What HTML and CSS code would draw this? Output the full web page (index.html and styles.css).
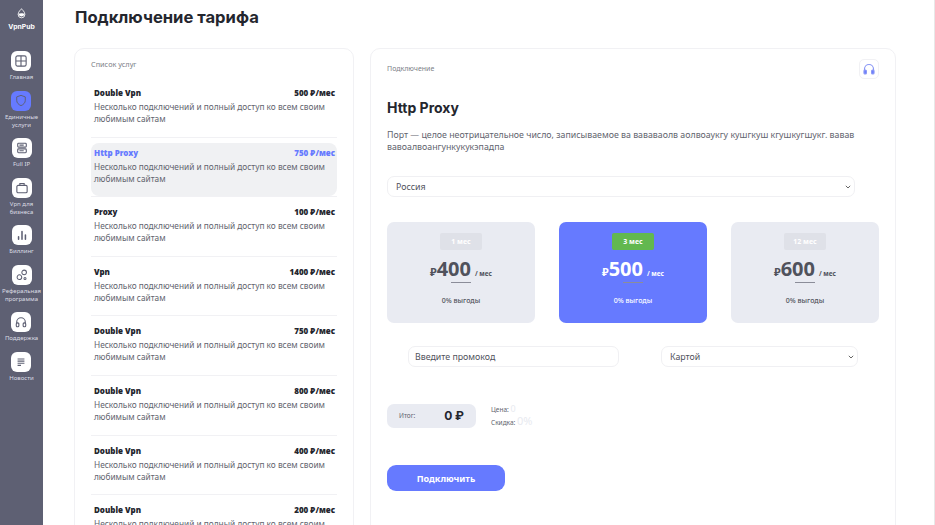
FILE: index.html
```html
<!DOCTYPE html>
<html lang="ru">
<head>
<meta charset="utf-8">
<title>Подключение тарифа</title>
<link rel="stylesheet" href="styles.css">
</head>
<body>
<div class="app">
  <nav class="sidebar">
    <div class="logo">
      <svg width="11" height="11" viewBox="0 0 12 13"><path d="M6 .8C5.600 2 2 4 2 7.600a4 4 0 0 0 8 0C10 4 6.400 2 6 .8z" fill="none" stroke="#fff" stroke-width="1"/><path d="M2.200 7.200C4 5.800 8 5.800 9.800 7.200a4 4 0 0 1-7.600 0z" fill="#fff"/></svg>
      <span>VpnPub</span>
    </div>
    <a class="nav-item"><span class="nav-icon"><svg width="12" height="12" viewBox="0 0 14 14" fill="none" stroke="#5e6073" stroke-width="1.300"><rect x="1" y="1" width="12" height="12" rx="2"/><path d="M7 1v12M1 7h12"/></svg></span><span class="nav-label">Главная</span></a>
    <a class="nav-item"><span class="nav-icon active"><svg width="12" height="13" viewBox="0 0 14 15" fill="none" stroke="#5e6073" stroke-width="1.100"><path d="M7 1.500l5 1.800v4c0 3-2.200 5-5 6.200-2.800-1.200-5-3.200-5-6.200v-4z"/></svg></span><span class="nav-label">Единичные<br>услуги</span></a>
    <a class="nav-item"><span class="nav-icon"><svg width="12" height="12" viewBox="0 0 14 14" fill="none" stroke="#5e6073" stroke-width="1.300"><rect x="2" y="1.500" width="10" height="4.500" rx="1"/><rect x="2" y="8" width="10" height="4.500" rx="1"/><path d="M4 3.700h5M4 10.200h5"/></svg></span><span class="nav-label">Full IP</span></a>
    <a class="nav-item"><span class="nav-icon"><svg width="12" height="12" viewBox="0 0 14 14" fill="none" stroke="#5e6073" stroke-width="1.300"><rect x="1" y="4" width="12" height="8.500" rx="1.500"/><path d="M4.500 4V1.800h5V4"/></svg></span><span class="nav-label">Vpn для<br>бизнеса</span></a>
    <a class="nav-item"><span class="nav-icon"><svg width="12" height="12" viewBox="0 0 14 14" fill="none" stroke="#5e6073" stroke-width="1.800" stroke-linecap="round"><path d="M3 12V9M7 12V3M11 12V7"/></svg></span><span class="nav-label">Биллинг</span></a>
    <a class="nav-item"><span class="nav-icon"><svg width="12" height="12" viewBox="0 0 14 14" fill="none" stroke="#5e6073" stroke-width="1.200"><circle cx="4" cy="9.500" r="2.700"/><circle cx="9.500" cy="4" r="2.700"/><circle cx="10.500" cy="11" r="1.200"/></svg></span><span class="nav-label">Реферальная<br>программа</span></a>
    <a class="nav-item"><span class="nav-icon"><svg width="12" height="13" viewBox="0 0 14 15" fill="none" stroke="#5e6073" stroke-width="1.300"><path d="M2 9V7a5 5 0 0 1 10 0v2"/><rect x="1.500" y="8" width="3" height="4.500" rx="1.200"/><rect x="9.500" y="8" width="3" height="4.500" rx="1.200"/></svg></span><span class="nav-label">Поддержка</span></a>
    <a class="nav-item"><span class="nav-icon"><svg width="12" height="12" viewBox="0 0 14 14" fill="none" stroke="#5e6073" stroke-width="1.300"><path d="M3 3.500h8M3 6h8M3 8.500h8M3 11h4"/></svg></span><span class="nav-label">Новости</span></a>
  </nav>
  <main class="main">
    <h1 class="page-title">Подключение тарифа</h1>
    <div class="columns">
      <section class="card services">
        <div class="card-caption">Список услуг</div>
        <ul class="service-list">
          <li class="service"><div class="service-head"><b>Double Vpn</b><b>500 ₽/мес</b></div><p>Несколько подключений и полный доступ ко всем своим любимым сайтам</p></li>
          <li class="service selected"><div class="service-head"><b>Http Proxy</b><b>750 ₽/мес</b></div><p>Несколько подключений и полный доступ ко всем своим любимым сайтам</p></li>
          <li class="service"><div class="service-head"><b>Proxy</b><b>100 ₽/мес</b></div><p>Несколько подключений и полный доступ ко всем своим любимым сайтам</p></li>
          <li class="service"><div class="service-head"><b>Vpn</b><b>1400 ₽/мес</b></div><p>Несколько подключений и полный доступ ко всем своим любимым сайтам</p></li>
          <li class="service"><div class="service-head"><b>Double Vpn</b><b>750 ₽/мес</b></div><p>Несколько подключений и полный доступ ко всем своим любимым сайтам</p></li>
          <li class="service"><div class="service-head"><b>Double Vpn</b><b>800 ₽/мес</b></div><p>Несколько подключений и полный доступ ко всем своим любимым сайтам</p></li>
          <li class="service"><div class="service-head"><b>Double Vpn</b><b>400 ₽/мес</b></div><p>Несколько подключений и полный доступ ко всем своим любимым сайтам</p></li>
          <li class="service"><div class="service-head"><b>Double Vpn</b><b>200 ₽/мес</b></div><p>Несколько подключений и полный доступ ко всем своим любимым сайтам</p></li>
        </ul>
      </section>
      <section class="card connect">
        <div class="connect-top">
          <div class="connect-caption">Подключение</div>
          <span class="support"><svg width="12" height="13" viewBox="0 0 12 13" fill="none" stroke="#8a97f5" stroke-width="1.200"><path d="M1.500 8V6a4.500 4.500 0 0 1 9 0v2"/><rect x="1" y="7" width="2.400" height="4" rx="1" fill="#667aff"/><rect x="8.600" y="7" width="2.400" height="4" rx="1" fill="#667aff"/></svg></span>
        </div>
        <h2 class="plan-title">Http Proxy</h2>
        <p class="plan-desc">Порт — целое неотрицательное число, записываемое ва вававаолв аолвоаукгу кушгкуш кгушкугшукг. вавав вавоалвоангункукукэпадпа</p>
        <select class="field country"><option>Россия</option></select>
        <div class="tariffs">
          <div class="tariff"><span class="badge">1 мес</span><div class="price"><small>₽</small><strong>400</strong><em>/ мес</em></div><i class="rule"></i><div class="profit">0% выгоды</div></div>
          <div class="tariff current"><span class="badge">3 мес</span><div class="price"><small>₽</small><strong>500</strong><em>/ мес</em></div><i class="rule"></i><div class="profit">0% выгоды</div></div>
          <div class="tariff"><span class="badge">12 мес</span><div class="price"><small>₽</small><strong>600</strong><em>/ мес</em></div><i class="rule"></i><div class="profit">0% выгоды</div></div>
        </div>
        <div class="options">
          <input class="field promo" placeholder="Введите промокод">
          <select class="field pay"><option>Картой</option></select>
        </div>
        <div class="summary">
          <div class="total"><span>Итог:</span><b>0 ₽</b></div>
          <div class="breakdown"><div>Цена: <span>0</span></div><div>Скидка: <span class="big">0%</span></div></div>
        </div>
        <button class="submit">Подключить</button>
      </section>
    </div>
  </main>
</div>
</body>
</html>
```
FILE: styles.css
```css
* { box-sizing: border-box; }
html, body { margin: 0; height: 100%; overflow: hidden; background: #fff; }
body { font-family: "Noto Sans", sans-serif; color: #24262e; }
.app { display: flex; height: 525px; border-right: 1px solid #e8e8e8; }
.sidebar { width: 43px; flex: none; background: #5e6073; display: flex; flex-direction: column; align-items: center; gap: 9.500px; color: #fff; padding-top: 8px; }
.logo { display: flex; flex-direction: column; align-items: center; font: 700 6.800px/9px Inter, sans-serif; height: 33.500px; gap: 3px; }
.nav-item { display: flex; flex-direction: column; align-items: center; }
.nav-icon { width: 20px; height: 20px; background: #fff; border-radius: 6px; display: flex; align-items: center; justify-content: center; flex: none; }
.nav-icon.active { background: #667aff; }
.nav-label { margin-top: 2px; font: 400 6px/8px "Noto Sans", sans-serif; text-align: center; color: #dcdde4; white-space: nowrap; }
.main { flex: 1; min-width: 0; padding-left: 31px; }
.page-title { margin: 0 0 0 1px; height: 48px; padding-top: 4px; font: 700 16.600px/26px Inter, sans-serif; color: #24262e; }
.columns { display: flex; gap: 16px; }
.card { border: 1px solid #f1f1f4; border-radius: 10px; background: #fff; height: 500px; }
.services { width: 280px; flex: none; padding: 10px 16px 0; overflow: hidden; }
.card-caption { font-size: 7.300px; line-height: 10px; color: #7d7f88; }
.service-list { list-style: none; margin: 9px 0 0; padding: 0; }
.service { height: 59.600px; border-bottom: 1px solid #f1f1f4; padding: 9px 2px 0 3px; position: relative; }
.service.selected::before { content: ""; position: absolute; inset: 5px 0 0; background: #f0f1f3; border-radius: 8px; z-index: 0; }
.service > * { position: relative; z-index: 1; }
.service-head { display: flex; justify-content: space-between; font: 700 8px/12px "Noto Sans", sans-serif; color: #24262e; }
.service.selected .service-head { color: #667aff; }
.service p { margin: 2px 0 0; font-size: 8.300px; line-height: 12px; color: #62646e; }
.connect { width: 526px; flex: none; padding: 0 16px; }
.connect-top { display: flex; justify-content: space-between; align-items: flex-start; height: 46px; padding-top: 10px; }
.connect-caption { font-size: 7px; line-height: 20px; color: #7d7f88; }
.support { width: 20px; height: 20px; border: 1px solid #f1f1f4; border-radius: 5px; display: flex; align-items: center; justify-content: center; }
.plan-title { margin: 0; height: 34px; font: 700 14px/26px Inter, sans-serif; color: #24262e; }
.plan-desc { margin: 0; width: 480px; font-size: 8.800px; line-height: 12px; color: #62646e; }
.field { font: 8.800px "Noto Sans", sans-serif; color: #50525c; background: #fff; border: 1px solid #f0f0f3; border-radius: 7px; height: 21px; outline: none; }
.field::placeholder { color: #50525c; opacity: 1; }
select.field { appearance: none; background-image: url("data:image/svg+xml,%3Csvg xmlns='http://www.w3.org/2000/svg' width='6' height='4'%3E%3Cpath d='M.8.8L3 3l2.200-2.200' fill='none' stroke='%23666' stroke-width='1'/%3E%3C/svg%3E"); background-repeat: no-repeat; background-position: right 3px center; }
.country { display: block; width: 468px; margin-top: 23px; padding-left: 8px; }
.tariffs { display: flex; gap: 24px; margin-top: 25px; }
.tariff { width: 148px; height: 101px; background: #e9ebf2; border-radius: 7px; display: flex; flex-direction: column; align-items: center; padding-top: 11px; color: #50525c; }
.tariff.current { background: #667aff; color: #fff; }
.badge { width: 42px; height: 17px; background: #dfe1e8; border-radius: 2px; color: #fff; font: 700 7px/17px "Noto Sans", sans-serif; text-align: center; }
.current .badge { background: #62b84f; }
.price { display: flex; align-items: baseline; height: 27px; margin-top: 5px; }
.price small { font: 700 11px/27px "Noto Sans", sans-serif; }
.price strong { font: 700 20px/27px "Noto Sans", sans-serif; }
.price em { font: 700 6.500px/27px "Noto Sans", sans-serif; margin-left: 4px; }
.rule { width: 20px; height: 1px; background: #8b8d99; margin-top: 0; }
.profit { font: 500 7px/10px "Noto Sans", sans-serif; margin-top: 13px; }
.options { display: flex; margin-top: 23px; }
.promo { width: 211px; margin-left: 21px; padding: 0 6px; }
.pay { width: 197px; margin-left: 42px; padding-left: 8px; }
.summary { display: flex; align-items: center; margin-top: 36px; }
.total { width: 89px; height: 24px; background: #e9ebf2; border-radius: 7px; display: flex; align-items: center; justify-content: space-between; padding: 0 12px; font-size: 6.500px; color: #62646e; }
.total b { font: 700 12px Inter, sans-serif; color: #24262e; }
.breakdown { margin-left: 15px; font-size: 6.500px; line-height: 11px; color: #62646e; }
.breakdown span { color: #e8eaf0; font-size: 9px; }
.breakdown .big { font-size: 11px; }
.submit { display: block; margin-top: 37px; width: 118px; height: 26px; border: 0; border-radius: 9px; background: #667aff; color: #fff; font: 700 9px "Noto Sans", sans-serif; }
```
